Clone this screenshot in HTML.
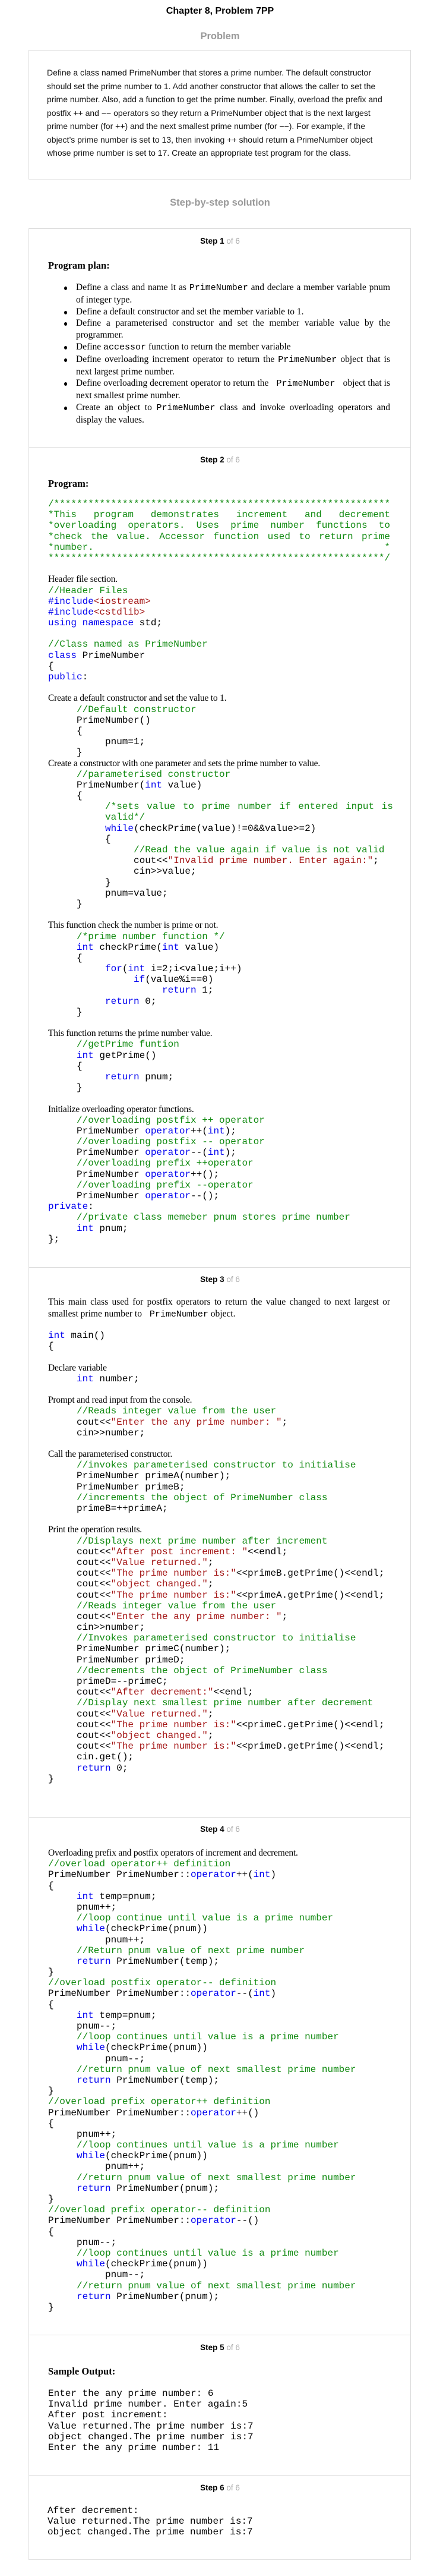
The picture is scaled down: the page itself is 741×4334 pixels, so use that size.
<!DOCTYPE html>
<html><head><meta charset="utf-8">
<style>
*{margin:0;padding:0;box-sizing:border-box}
body{width:741px;height:4334px;background:#fff;position:relative;font-family:"Liberation Sans",Arial,sans-serif;color:#000;overflow:hidden}
.abs{position:absolute}
.ctr{left:0;width:741px;text-align:center}
.title{font-weight:bold;font-size:16px;top:10px}
.h2{font-weight:bold;font-size:16.5px;color:#999;}
.pbox{left:48px;top:84px;width:644px;height:218px;border:1px solid #ddd}
.ptext{left:79px;top:111px;width:580px;font-size:14px;line-height:22.5px;color:#111}
.sbox{left:48px;top:384px;width:644px;height:3923px;border:1px solid #ddd}
.div{left:49px;width:642px;height:1px;background:#ddd}
.step{font-size:13.5px;font-weight:bold;}
.step span{font-weight:normal;color:#aaa}
.t{font-family:"Liberation Serif","Times New Roman",serif;font-size:15.5px}
.hb{font-family:"Liberation Serif","Times New Roman",serif;font-weight:bold;font-size:16.5px}
.code{left:81px;width:600px;font-family:"Liberation Mono","Courier New",monospace;font-size:16px;line-height:18.2px}
.code div{white-space:pre;height:18.2px}
.code .t{font-size:15.5px;letter-spacing:-0.2px}
.c{color:#108a10}.k{color:#0000f0}.s{color:#a31515}
.l1{padding-left:48px}.l2{padding-left:96px}.l3{padding-left:144px}.l4{padding-left:192px}
.j{text-align:justify;text-align-last:justify;width:576px;white-space:normal!important}
ul.plan{left:108px;top:474px;width:549px;font-family:"Liberation Serif","Times New Roman",serif;font-size:15.5px;line-height:19.8px;list-style:none;text-align:justify}
ul.plan li{position:relative;padding-left:20px}
ul.plan li:before{content:"";position:absolute;left:0;top:8px;width:5px;height:6px;border-radius:50%;background:#000}
.m{font-family:"Liberation Mono","Courier New",monospace;font-size:15px}
</style></head><body>
<div class="abs ctr title">Chapter 8, Problem 7PP</div>
<div class="abs ctr h2" style="top:52px">Problem</div>
<div class="abs pbox"></div>
<div class="abs ptext">Define a class named PrimeNumber that stores a prime number. The default constructor should set the prime number to 1. Add another constructor that allows the caller to set the prime number. Also, add a function to get the prime number. Finally, overload the prefix and postfix ++ and −− operators so they return a PrimeNumber object that is the next largest prime number (for ++) and the next smallest prime number (for −−). For example, if the object’s prime number is set to 13, then invoking ++ should return a PrimeNumber object whose prime number is set to 17. Create an appropriate test program for the class.</div>
<div class="abs ctr h2" style="top:332px">Step-by-step solution</div>

<div class="abs sbox"></div>
<div class="abs div" style="top:752px"></div>
<div class="abs div" style="top:2132px"></div>
<div class="abs div" style="top:3057px"></div>
<div class="abs div" style="top:3928px"></div>
<div class="abs div" style="top:4164px"></div>

<div class="abs ctr step" style="top:398px">Step 1 <span>of 6</span></div>
<div class="abs hb" style="left:81px;top:437px">Program plan:</div>
<ul class="abs plan">
<li>Define a class and name it as <span class="m">PrimeNumber</span> and declare a member variable pnum of integer type.</li>
<li>Define a default constructor and set the member variable to 1.</li>
<li>Define a parameterised constructor and set the member variable value by the programmer.</li>
<li>Define <span class="m">accessor</span> function to return the member variable</li>
<li>Define overloading increment operator to return the <span class="m">PrimeNumber</span> object that is next largest prime number.</li>
<li>Define overloading decrement operator to return the <span class="m">&nbsp;PrimeNumber&nbsp;</span> object that is next smallest prime number.</li>
<li>Create an object to <span class="m">PrimeNumber</span> class and invoke overloading operators and display the values.</li>
</ul>

<div class="abs ctr step" style="top:766px">Step 2 <span>of 6</span></div>
<div class="abs hb" style="left:81px;top:804px">Program:</div>
<div class="abs code" style="top:839px">
<div class="c">/***********************************************************</div>
<div class="c j">*This program demonstrates increment and decrement</div>
<div class="c j">*overloading operators. Uses prime number functions to</div>
<div class="c j">*check the value. Accessor function used to return prime</div>
<div class="c j">*number. *</div>
<div class="c">***********************************************************/</div>
<div></div>
<div class="t">Header file section.</div>
<div class="c">//Header Files</div>
<div><span class="k">#include</span><span class="s">&lt;iostream&gt;</span></div>
<div><span class="k">#include</span><span class="s">&lt;cstdlib&gt;</span></div>
<div><span class="k">using namespace</span> std;</div>
<div></div>
<div class="c">//Class named as PrimeNumber</div>
<div><span class="k">class</span> PrimeNumber</div>
<div>{</div>
<div><span class="k">public</span>:</div>
<div></div>
<div class="t">Create a default constructor and set the value to 1.</div>
<div class="l1 c">//Default constructor</div>
<div class="l1">PrimeNumber()</div>
<div class="l1">{</div>
<div class="l2">pnum=1;</div>
<div class="l1">}</div>
<div class="t">Create a constructor with one parameter and sets the prime number to value.</div>
<div class="l1 c">//parameterised constructor</div>
<div class="l1">PrimeNumber(<span class="k">int</span> value)</div>
<div class="l1">{</div>
<div class="l2 c" style="width:576px;word-spacing:3px">/*sets value to prime number if entered input is</div>
<div class="l2 c">valid*/</div>
<div class="l2"><span class="k">while</span>(checkPrime(value)!=0&amp;&amp;value&gt;=2)</div>
<div class="l2">{</div>
<div class="l3 c">//Read the value again if value is not valid</div>
<div class="l3">cout&lt;&lt;<span class="s">"Invalid prime number. Enter again:"</span>;</div>
<div class="l3">cin&gt;&gt;value;</div>
<div class="l2">}</div>
<div class="l2">pnum=value;</div>
<div class="l1">}</div>
<div></div>
<div class="t">This function check the number is prime or not.</div>
<div class="l1 c">/*prime number function */</div>
<div class="l1"><span class="k">int</span> checkPrime(<span class="k">int</span> value)</div>
<div class="l1">{</div>
<div class="l2"><span class="k">for</span>(<span class="k">int</span> i=2;i&lt;value;i++)</div>
<div class="l3"><span class="k">if</span>(value%i==0)</div>
<div class="l4"><span class="k">return</span> 1;</div>
<div class="l2"><span class="k">return</span> 0;</div>
<div class="l1">}</div>
<div></div>
<div class="t">This function returns the prime number value.</div>
<div class="l1 c">//getPrime funtion</div>
<div class="l1"><span class="k">int</span> getPrime()</div>
<div class="l1">{</div>
<div class="l2"><span class="k">return</span> pnum;</div>
<div class="l1">}</div>
<div></div>
<div class="t">Initialize overloading operator functions.</div>
<div class="l1 c">//overloading postfix ++ operator</div>
<div class="l1">PrimeNumber <span class="k">operator</span>++(<span class="k">int</span>);</div>
<div class="l1 c">//overloading postfix -- operator</div>
<div class="l1">PrimeNumber <span class="k">operator</span>--(<span class="k">int</span>);</div>
<div class="l1 c">//overloading prefix ++operator</div>
<div class="l1">PrimeNumber <span class="k">operator</span>++();</div>
<div class="l1 c">//overloading prefix --operator</div>
<div class="l1">PrimeNumber <span class="k">operator</span>--();</div>
<div><span class="k">private</span>:</div>
<div class="l1 c">//private class memeber pnum stores prime number</div>
<div class="l1"><span class="k">int</span> pnum;</div>
<div>};</div>
</div>

<div class="abs ctr step" style="top:2145px">Step 3 <span>of 6</span></div>
<div class="abs t" style="left:81px;top:2181px;width:576px;line-height:20px;text-align:justify">This main class used for postfix operators to return the value changed to next largest or smallest prime number to <span class="m">&nbsp;PrimeNumber</span> object.</div>
<div class="abs code" style="top:2238px">
<div><span class="k">int</span> main()</div>
<div>{</div>
<div></div>
<div class="t">Declare variable</div>
<div class="l1"><span class="k">int</span> number;</div>
<div></div>
<div class="t">Prompt and read input from the console.</div>
<div class="l1 c">//Reads integer value from the user</div>
<div class="l1">cout&lt;&lt;<span class="s">"Enter the any prime number: "</span>;</div>
<div class="l1">cin&gt;&gt;number;</div>
<div></div>
<div class="t">Call the parameterised constructor.</div>
<div class="l1 c">//invokes parameterised constructor to initialise</div>
<div class="l1">PrimeNumber primeA(number);</div>
<div class="l1">PrimeNumber primeB;</div>
<div class="l1 c">//increments the object of PrimeNumber class</div>
<div class="l1">primeB=++primeA;</div>
<div></div>
<div class="t">Print the operation results.</div>
<div class="l1 c">//Displays next prime number after increment</div>
<div class="l1">cout&lt;&lt;<span class="s">"After post increment: "</span>&lt;&lt;endl;</div>
<div class="l1">cout&lt;&lt;<span class="s">"Value returned."</span>;</div>
<div class="l1">cout&lt;&lt;<span class="s">"The prime number is:"</span>&lt;&lt;primeB.getPrime()&lt;&lt;endl;</div>
<div class="l1">cout&lt;&lt;<span class="s">"object changed."</span>;</div>
<div class="l1">cout&lt;&lt;<span class="s">"The prime number is:"</span>&lt;&lt;primeA.getPrime()&lt;&lt;endl;</div>
<div class="l1 c">//Reads integer value from the user</div>
<div class="l1">cout&lt;&lt;<span class="s">"Enter the any prime number: "</span>;</div>
<div class="l1">cin&gt;&gt;number;</div>
<div class="l1 c">//Invokes parameterised constructor to initialise</div>
<div class="l1">PrimeNumber primeC(number);</div>
<div class="l1">PrimeNumber primeD;</div>
<div class="l1 c">//decrements the object of PrimeNumber class</div>
<div class="l1">primeD=--primeC;</div>
<div class="l1">cout&lt;&lt;<span class="s">"After decrement:"</span>&lt;&lt;endl;</div>
<div class="l1 c">//Display next smallest prime number after decrement</div>
<div class="l1">cout&lt;&lt;<span class="s">"Value returned."</span>;</div>
<div class="l1">cout&lt;&lt;<span class="s">"The prime number is:"</span>&lt;&lt;primeC.getPrime()&lt;&lt;endl;</div>
<div class="l1">cout&lt;&lt;<span class="s">"object changed."</span>;</div>
<div class="l1">cout&lt;&lt;<span class="s">"The prime number is:"</span>&lt;&lt;primeD.getPrime()&lt;&lt;endl;</div>
<div class="l1">cin.get();</div>
<div class="l1"><span class="k">return</span> 0;</div>
<div>}</div>
</div>

<div class="abs ctr step" style="top:3070px">Step 4 <span>of 6</span></div>
<div class="abs code" style="top:3109px;line-height:18.12px">
<div class="t">Overloading prefix and postfix operators of increment and decrement.</div>
<div class="c">//overload operator++ definition</div>
<div>PrimeNumber PrimeNumber::<span class="k">operator</span>++(<span class="k">int</span>)</div>
<div>{</div>
<div class="l1"><span class="k">int</span> temp=pnum;</div>
<div class="l1">pnum++;</div>
<div class="l1 c">//loop continue until value is a prime number</div>
<div class="l1"><span class="k">while</span>(checkPrime(pnum))</div>
<div class="l2">pnum++;</div>
<div class="l1 c">//Return pnum value of next prime number</div>
<div class="l1"><span class="k">return</span> PrimeNumber(temp);</div>
<div>}</div>
<div class="c">//overload postfix operator-- definition</div>
<div>PrimeNumber PrimeNumber::<span class="k">operator</span>--(<span class="k">int</span>)</div>
<div>{</div>
<div class="l1"><span class="k">int</span> temp=pnum;</div>
<div class="l1">pnum--;</div>
<div class="l1 c">//loop continues until value is a prime number</div>
<div class="l1"><span class="k">while</span>(checkPrime(pnum))</div>
<div class="l2">pnum--;</div>
<div class="l1 c">//return pnum value of next smallest prime number</div>
<div class="l1"><span class="k">return</span> PrimeNumber(temp);</div>
<div>}</div>
<div class="c">//overload prefix operator++ definition</div>
<div>PrimeNumber PrimeNumber::<span class="k">operator</span>++()</div>
<div>{</div>
<div class="l1">pnum++;</div>
<div class="l1 c">//loop continues until value is a prime number</div>
<div class="l1"><span class="k">while</span>(checkPrime(pnum))</div>
<div class="l2">pnum++;</div>
<div class="l1 c">//return pnum value of next smallest prime number</div>
<div class="l1"><span class="k">return</span> PrimeNumber(pnum);</div>
<div>}</div>
<div class="c">//overload prefix operator-- definition</div>
<div>PrimeNumber PrimeNumber::<span class="k">operator</span>--()</div>
<div>{</div>
<div class="l1">pnum--;</div>
<div class="l1 c">//loop continues until value is a prime number</div>
<div class="l1"><span class="k">while</span>(checkPrime(pnum))</div>
<div class="l2">pnum--;</div>
<div class="l1 c">//return pnum value of next smallest prime number</div>
<div class="l1"><span class="k">return</span> PrimeNumber(pnum);</div>
<div>}</div>
</div>

<div class="abs ctr step" style="top:3942px">Step 5 <span>of 6</span></div>
<div class="abs hb" style="left:81px;top:3980px">Sample Output:</div>
<div class="abs code" style="top:4018px;line-height:18px">
<div>Enter the any prime number: 6</div>
<div>Invalid prime number. Enter again:5</div>
<div>After post increment:</div>
<div>Value returned.The prime number is:7</div>
<div>object changed.The prime number is:7</div>
<div>Enter the any prime number: 11</div>
</div>

<div class="abs ctr step" style="top:4178px">Step 6 <span>of 6</span></div>
<div class="abs code" style="top:4215px;left:80px;line-height:18px">
<div>After decrement:</div>
<div>Value returned.The prime number is:7</div>
<div>object changed.The prime number is:7</div>
</div>
</body></html>
